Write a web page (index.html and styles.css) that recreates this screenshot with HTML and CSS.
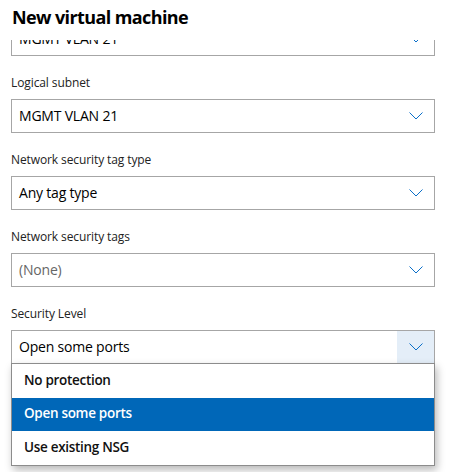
FILE: index.html
```html
<!DOCTYPE html>
<html>
<head>
<meta charset="utf-8">
<link rel="stylesheet" href="styles.css">
</head>
<body>
<div class="page">
  <h1 class="title">New virtual machine</h1>
  <div class="scroll">
    <div class="inner">
      <div class="field">
        <div class="select"><span class="value">MGMT VLAN 21</span><span class="chev"><svg width="14" height="8" viewBox="0 0 14 8"><polyline points="0.5,0.5 7,7 13.5,0.5" fill="none" stroke="#0a6fc9" stroke-width="1"/></svg></span></div>
      </div>
      <div class="field">
        <label class="label">Logical subnet</label>
        <div class="select"><span class="value">MGMT VLAN 21</span><span class="chev"><svg width="14" height="8" viewBox="0 0 14 8"><polyline points="0.5,0.5 7,7 13.5,0.5" fill="none" stroke="#0a6fc9" stroke-width="1"/></svg></span></div>
      </div>
      <div class="field">
        <label class="label">Network security tag type</label>
        <div class="select"><span class="value">Any tag type</span><span class="chev"><svg width="14" height="8" viewBox="0 0 14 8"><polyline points="0.5,0.5 7,7 13.5,0.5" fill="none" stroke="#0a6fc9" stroke-width="1"/></svg></span></div>
      </div>
      <div class="field">
        <label class="label">Network security tags</label>
        <div class="select"><span class="value muted">(None)</span><span class="chev"><svg width="14" height="8" viewBox="0 0 14 8"><polyline points="0.5,0.5 7,7 13.5,0.5" fill="none" stroke="#0a6fc9" stroke-width="1"/></svg></span></div>
      </div>
      <div class="field">
        <label class="label">Security Level</label>
        <div class="select open"><span class="value">Open some ports</span><span class="chev"><svg width="14" height="8" viewBox="0 0 14 8"><polyline points="0.5,0.5 7,7 13.5,0.5" fill="none" stroke="#0a6fc9" stroke-width="1"/></svg></span>
          <ul class="menu">
            <li class="item">No protection</li>
            <li class="item selected">Open some ports</li>
            <li class="item">Use existing NSG</li>
          </ul>
        </div>
      </div>
    </div>
  </div>
</div>
</body>
</html>
```
FILE: styles.css
```css
html, body {
  margin: 0;
  padding: 0;
  background: #fff;
}
body {
  font-family: "Segoe UI", "Open Sans", "Noto Sans", sans-serif;
  color: #000;
  width: 450px;
  height: 472px;
  overflow: hidden;
}
.page {
  display: flex;
  flex-direction: column;
  height: 472px;
}
.title {
  margin: 0;
  height: 40px;
  padding: 4px 0 0 12px;
  box-sizing: border-box;
  font-size: 18px;
  line-height: 26px;
  font-weight: 700;
  letter-spacing: -0.6px;
}
.scroll {
  flex: 1;
  overflow: hidden;
}
.inner {
  margin-top: -18px;
  padding: 0 15px 0 11px;
  display: flex;
  flex-direction: column;
  gap: 19px;
}
.field {
  display: flex;
  flex-direction: column;
  gap: 8px;
}
.label {
  font-size: 12px;
  line-height: 16px;
  color: #222;
  letter-spacing: -0.1px;
}
.select {
  position: relative;
  height: 34px;
  box-sizing: border-box;
  border: 1px solid #a6a6a6;
  display: flex;
  align-items: center;
  justify-content: space-between;
}
.value {
  padding-left: 7px;
  font-size: 14px;
  line-height: 20px;
  letter-spacing: -0.2px;
}
.muted {
  color: #666;
}
.chev {
  width: 37px;
  height: 100%;
  display: flex;
  align-items: center;
  justify-content: center;
}
.chev svg {
  display: block;
}
.open .chev {
  background: #e4eef8;
}
.menu {
  position: absolute;
  left: -1px;
  right: -1px;
  top: 32px;
  margin: 0;
  padding: 0;
  list-style: none;
  background: #fff;
  border: 1px solid #8c8c8c;
  box-shadow: 2px 4px 8px rgba(0, 0, 0, 0.28);
}
.item {
  height: 34px;
  box-sizing: border-box;
  padding: 0 0 3px 12px;
  display: flex;
  align-items: center;
  font-size: 13.5px;
  font-weight: 600;
  letter-spacing: -0.3px;
  color: #111;
}
.item.selected {
  background: #0067b8;
  color: #fff;
  height: 33px;
}
```
